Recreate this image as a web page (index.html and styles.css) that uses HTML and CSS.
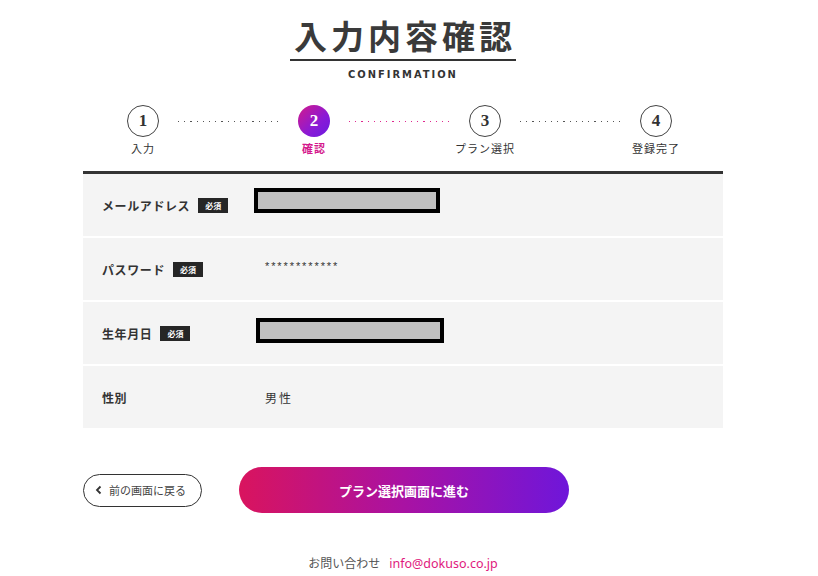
FILE: index.html
```html
<!DOCTYPE html>
<html lang="ja">
<head>
<meta charset="utf-8">
<link rel="stylesheet" href="styles.css">
</head>
<body>
<div class="page">
  <header class="head">
    <h1 class="title">入力内容確認</h1>
    <div class="sub">CONFIRMATION</div>
  </header>

  <div class="stepper">
    <div class="step"><span class="circle">1</span><span class="label">入力</span></div>
    <span class="line"></span>
    <div class="step active"><span class="circle">2</span><span class="label">確認</span></div>
    <span class="line pink"></span>
    <div class="step"><span class="circle">3</span><span class="label">プラン選択</span></div>
    <span class="line"></span>
    <div class="step"><span class="circle">4</span><span class="label">登録完了</span></div>
  </div>

  <div class="table">
    <div class="row">
      <div class="key">メールアドレス<span class="badge">必須</span></div>
      <div class="val"><span class="redact r1"></span></div>
    </div>
    <div class="row">
      <div class="key">パスワード<span class="badge">必須</span></div>
      <div class="val pw">************</div>
    </div>
    <div class="row">
      <div class="key">生年月日<span class="badge">必須</span></div>
      <div class="val"><span class="redact r2"></span></div>
    </div>
    <div class="row">
      <div class="key">性別</div>
      <div class="val sex">男性</div>
    </div>
  </div>

  <div class="actions">
    <a class="back" href="#">
      <svg class="chev" width="8" height="10" viewBox="0 0 8 10"><path d="M5.5 1.5 L2 5 L5.5 8.5" fill="none" stroke="#333" stroke-width="1.8"/></svg>
      前の画面に戻る
    </a>
    <a class="next" href="#">プラン選択画面に進む</a>
  </div>

  <footer class="foot">お問い合わせ<span class="mail">info@dokuso.co.jp</span></footer>
</div>
</body>
</html>
```

FILE: styles.css
```css
* { box-sizing: border-box; }
html, body { margin: 0; padding: 0; background: #fff; }
body {
  font-family: "Noto Sans CJK JP", "Noto Sans", sans-serif;
  color: #333;
}
.page {
  width: 640px;
  margin-left: 83px;
  display: flex;
  flex-direction: column;
}
.head {
  display: flex;
  flex-direction: column;
  align-items: center;
  padding-top: 13px;
}
.title {
  margin: 0;
  font-size: 33px;
  font-weight: 700;
  line-height: 44px;
  letter-spacing: 4px;
  padding-left: 4px;
  color: #3a3a3a;
  border-bottom: 2px solid #333;
  height: 48px;
}
.sub {
  margin-top: 7px;
  font-family: "DejaVu Sans Condensed", "DejaVu Sans", sans-serif;
  font-stretch: condensed;
  font-weight: 700;
  font-size: 11px;
  letter-spacing: 2px;
  line-height: 14px;
  color: #333;
}
.stepper {
  display: flex;
  align-items: flex-start;
  margin-top: 23px;
  padding-left: 44px;
  height: 66px;
}
.step {
  width: 32px;
  display: flex;
  flex-direction: column;
  align-items: center;
}
.circle {
  width: 32px;
  height: 32px;
  border-radius: 50%;
  border: 1px solid #444;
  display: flex;
  align-items: center;
  justify-content: center;
  font-family: "Liberation Serif", "DejaVu Serif", serif;
  font-weight: 700;
  font-size: 17px;
  color: #333;
}
.label {
  white-space: nowrap;
  font-size: 11px;
  letter-spacing: 1px;
  line-height: 14px;
  margin-top: 4px;
  color: #333;
}
.step.active .circle {
  border: none;
  background: linear-gradient(135deg, #d41a8a 0%, #8a1ad6 60%, #6a1be0 100%);
  color: #fff;
}
.step.active .label { color: #d4198d; font-weight: 700; }
.line {
  width: 101px;
  height: 1px;
  margin: 16px 19px 0;
  background-image: repeating-linear-gradient(to right, #555 0 1.3px, transparent 1.3px 6.2px);
}
.line.pink {
  background-image: repeating-linear-gradient(to right, #e0288e 0 1.3px, transparent 1.3px 6.2px);
}
.table {
  border-top: 3px solid #333;
  display: flex;
  flex-direction: column;
  gap: 2px;
}
.row {
  background: #f4f4f4;
  height: 62px;
  display: flex;
  align-items: center;
}
.key {
  width: 172px;
  padding-left: 19px;
  font-size: 12px;
  font-weight: 700;
  letter-spacing: 0.6px;
  display: flex;
  align-items: center;
  color: #333;
}
.badge {
  background: #262626;
  color: #fff;
  font-size: 8px;
  font-weight: 700;
  line-height: 15px;
  padding: 0 7px;
  margin-left: 8px;
  letter-spacing: 0;
}
.val {
  font-size: 12px;
  color: #333;
}
.val.sex { padding-left: 10px; letter-spacing: 2px; }
.val.pw {
  font-family: "Liberation Sans", Arial, sans-serif;
  letter-spacing: 1.9px;
  font-size: 11px;
  margin-top: -6px;
  padding-left: 10px;
}
.redact {
  display: block;
  border: 4px solid #000;
  background: #c0c0c0;
  height: 25px;
}
.r1 { width: 186px; margin-left: -1px; margin-top: -9px; }
.r2 { width: 188px; margin-left: 1px; margin-top: -6px; }
.actions {
  display: flex;
  align-items: center;
  gap: 37px;
  margin-top: 39px;
}
.back {
  width: 119px;
  height: 33px;
  border: 1px solid #333;
  border-radius: 17px;
  display: flex;
  align-items: center;
  justify-content: center;
  gap: 6px;
  font-size: 11px;
  color: #444;
  text-decoration: none;
  padding-right: 4px;
}
.next {
  width: 330px;
  height: 46px;
  border-radius: 23px;
  background: linear-gradient(90deg, #d9145e 0%, #a912a3 50%, #6f16da 100%);
  color: #fff;
  font-size: 13px;
  font-weight: 700;
  display: flex;
  align-items: center;
  justify-content: center;
  text-decoration: none;
}
.foot {
  margin-top: 42px;
  text-align: center;
  font-size: 12px;
  color: #555;
  line-height: 16px;
}
.mail {
  color: #e0197d;
  margin-left: 9px;
  font-family: "Noto Sans", sans-serif;
  font-size: 12.5px;
}
```
